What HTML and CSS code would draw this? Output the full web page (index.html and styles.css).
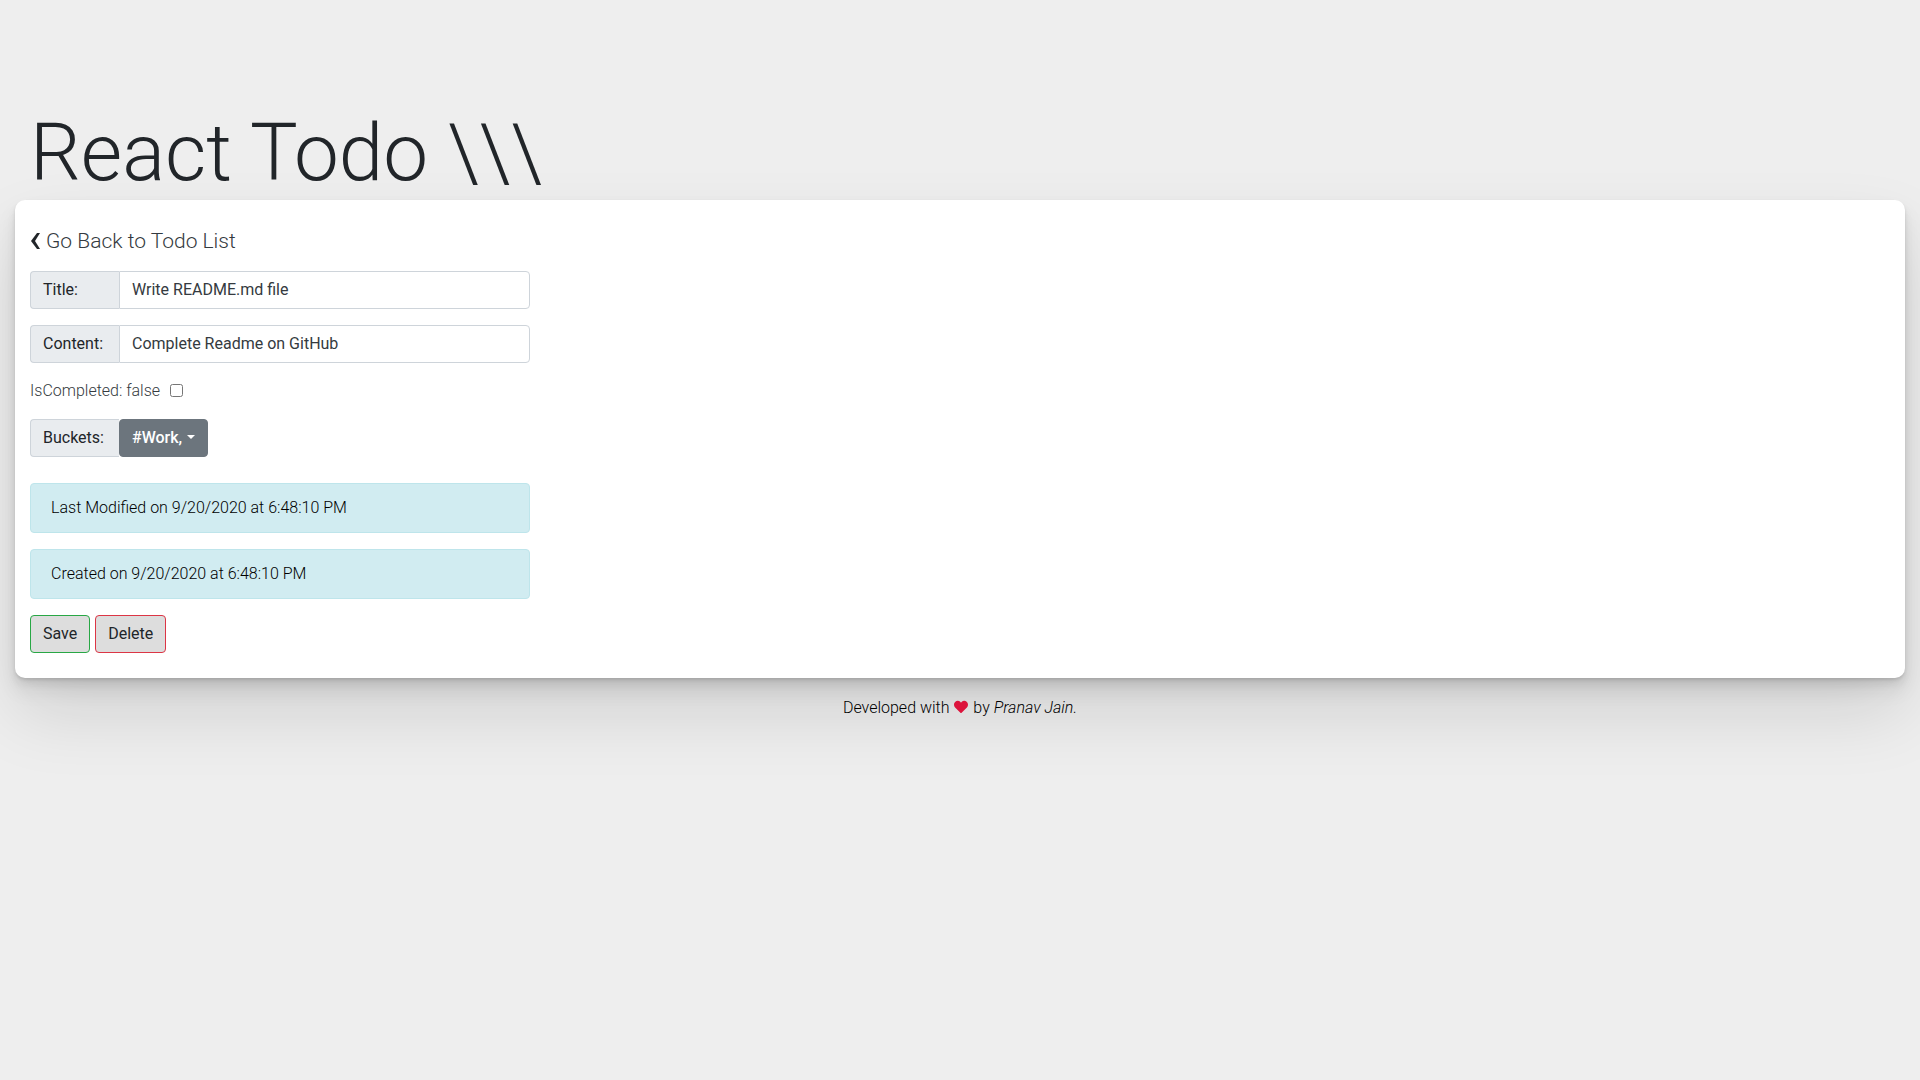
FILE: index.html
```html
<!DOCTYPE html>
<html lang="en">
<head>
<meta charset="utf-8">
<meta name="viewport" content="width=device-width, initial-scale=1">
<title>React Todo</title>
<link rel="stylesheet" href="styles.css">
</head>
<body>
<header class="page-header">
  <h1 class="title">React Todo \\\</h1>
</header>
<main class="card">
  <a class="back" href="#"><svg class="chevron" viewBox="0 0 12 16" aria-hidden="true"><path d="M10 0L7 0L1 8L7 16L10 16L5 8Z"/></svg>Go Back to Todo List</a>
  <form class="form">
    <div class="group">
      <label class="addon" for="title">Title:</label>
      <input class="control" id="title" type="text" value="Write README.md file">
    </div>
    <div class="group">
      <label class="addon" for="content">Content:</label>
      <input class="control" id="content" type="text" value="Complete Readme on GitHub">
    </div>
    <div class="check">
      <label for="done">IsCompleted: false</label>
      <input class="box" id="done" type="checkbox">
    </div>
    <div class="group buckets">
      <label class="addon" for="buckets">Buckets:</label>
      <button class="dropdown" id="buckets" type="button">#Work, <span class="caret"></span></button>
    </div>
    <div class="alert">Last Modified on 9/20/2020 at 6:48:10 PM</div>
    <div class="alert">Created on 9/20/2020 at 6:48:10 PM</div>
    <div class="actions">
      <button class="btn save" type="button">Save</button>
      <button class="btn delete" type="button">Delete</button>
    </div>
  </form>
</main>
<footer class="footer">Developed with <svg class="heart" viewBox="0 0 512 512" aria-hidden="true"><path d="M462.3 62.6C407.5 15.9 326 24.3 275.700 76.200L256 96.500l-19.700-20.300C186.100 24.300 104.500 15.900 49.700 62.600c-62.800 53.600-66.100 149.800-9.900 207.900l193.500 199.800c12.500 12.900 32.800 12.900 45.300 0l193.500-199.800c56.300-58.100 53-154.300-9.800-207.900z"/></svg> by <em>Pranav Jain.</em></footer>
</body>
</html>
```
FILE: styles.css
```css
* {
  box-sizing: border-box;
}

body {
  min-height: 100vh;
  margin: 0;
  padding: 106px 15px 0;
  background: #eee;
  color: #212529;
  font: 300 16px/24px Roboto, sans-serif;
}

.title {
  margin: 0;
  padding: 0 15px;
  font-size: 80px;
  font-weight: 300;
  line-height: 94px;
}

.card {
  padding: 25px 15px;
  border-radius: 10px;
  background: #fff;
  box-shadow:
    0 2px 3px rgba(0, 0, 0, .1),
    0 6px 8px rgba(0, 0, 0, .07),
    0 12px 20px rgba(0, 0, 0, .08),
    0 35px 70px rgba(0, 0, 0, .12);
}

.back {
  display: inline-flex;
  align-items: center;
  gap: 4px;
  margin-bottom: 14px;
  color: #343a40;
  font-size: 21px;
  line-height: 32px;
  text-decoration: none;
}

.chevron {
  width: 12px;
  height: 16px;
  fill: #212529;
}

.form {
  width: 500px;
  max-width: 100%;
}

.group {
  display: flex;
  margin-bottom: 16px;
}

.addon {
  width: 89px;
  padding: 6px 12px;
  border: 1px solid #ced4da;
  border-right: 0;
  border-radius: 4px 0 0 4px;
  background: #e9ecef;
  color: #212529;
  font-weight: 400;
}

.control {
  flex: 1;
  min-width: 0;
  height: 38px;
  padding: 5px 12px 7px;
  border: 1px solid #ced4da;
  border-radius: 0 4px 4px 0;
  background: #fff;
  color: #343a40;
  font: 400 16px/24px Roboto, sans-serif;
}

.check {
  display: flex;
  align-items: center;
  gap: 10px;
  margin-bottom: 16px;
  color: #343a40;
}

.box {
  width: 13px;
  height: 13px;
  margin: 0 0 2px;
}

.buckets {
  margin-bottom: 26px;
}

.dropdown {
  display: flex;
  align-items: center;
  gap: 5px;
  padding: 6px 12px;
  border: 1px solid #6c757d;
  border-radius: 4px;
  background: #6c757d;
  color: #fff;
  font: 500 16px/24px Roboto, sans-serif;
}

.caret {
  margin-bottom: 2px;
  border: 4px solid transparent;
  border-top-color: #fff;
  border-bottom: 0;
}

.alert {
  margin-bottom: 16px;
  padding: 12px 20px;
  border: 1px solid #bee5eb;
  border-radius: 4px;
  background: #d1ecf1;
  color: #000;
}

.actions {
  display: flex;
  gap: 5px;
}

.btn {
  padding: 6px 12px;
  border: 1px solid;
  border-radius: 4px;
  background: #ddd;
  color: #212529;
  font: 400 16px/24px Roboto, sans-serif;
}

.save {
  border-color: #28a745;
}

.delete {
  border-color: #dc3545;
}

.footer {
  padding-top: 18px;
  color: #000;
  text-align: center;
}

.heart {
  width: 14px;
  height: 14px;
  margin: 0 1px;
  fill: crimson;
  vertical-align: -1px;
}
```
